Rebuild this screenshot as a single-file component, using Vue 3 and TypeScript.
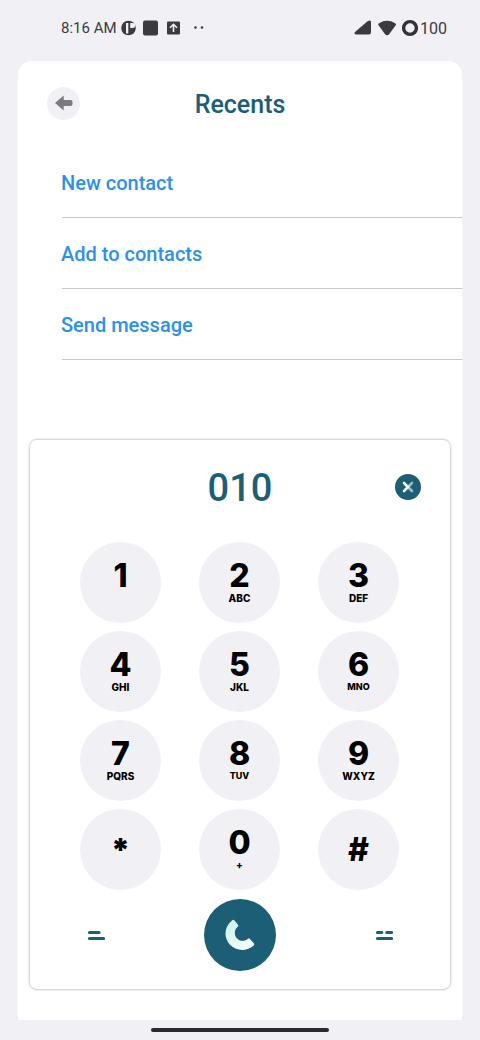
<script setup lang="ts">
import { ref } from 'vue'

interface Key {
  digit: string
  letters?: string
  kind?: 'star' | 'hash' | 'small'
}

const actions: string[] = ['New contact', 'Add to contacts', 'Send message']

const keys: Key[] = [
  { digit: '1' },
  { digit: '2', letters: 'ABC' },
  { digit: '3', letters: 'DEF' },
  { digit: '4', letters: 'GHI' },
  { digit: '5', letters: 'JKL' },
  { digit: '6', letters: 'MNO', kind: 'small' },
  { digit: '7', letters: 'PQRS' },
  { digit: '8', letters: 'TUV', kind: 'small' },
  { digit: '9', letters: 'WXYZ' },
  { digit: '*', kind: 'star' },
  { digit: '0', letters: '+' },
  { digit: '#', kind: 'hash' },
]

const dialled = ref('010')

function press(digit: string): void {
  dialled.value += digit
}

function erase(): void {
  dialled.value = dialled.value.slice(0, -1)
}
</script>

<template>
  <div class="screen">
    <div class="status">
      <span class="clock">8:16 AM</span>
      <svg class="app-icons" width="84" height="18" viewBox="0 0 84 18" aria-hidden="true">
        <circle cx="7.500" cy="9" r="7.300" fill="#3b3b3f" />
        <path d="M5 4v10.500h2.300V4zM9.200 4h2.400a2.300 2.300 0 0 1 0 5H9.200z" fill="#f1f0f5" />
        <rect x="22" y="1.500" width="15" height="15" rx="2" fill="#3b3b3f" />
        <rect x="46" y="2.500" width="13" height="13" rx="1" fill="#3b3b3f" />
        <path d="M52.500 13V5.500M49 8.800l3.500-3.500L56 8.800" fill="none" stroke="#f1f0f5" stroke-width="1.600" />
        <circle cx="74.500" cy="8.500" r="1.300" fill="#3b3b3f" />
        <circle cx="81" cy="8.500" r="1.300" fill="#3b3b3f" />
      </svg>
      <svg class="signals" width="64" height="18" viewBox="0 0 64 18" aria-hidden="true">
        <path d="M1 13 13.500 2.300q3.500-2 3.500 1V13q0 2.500-2 2.500H2q-2.500-.600-1-2.500z" fill="#3b3b3f" />
        <path d="M24.500 6.300q-.800-1.200.600-2.100 8-4.800 16 0 1.400.900.600 2.100l-6.600 9q-2 1.700-4 0z" fill="#3b3b3f" />
        <circle cx="56" cy="9" r="6.400" fill="none" stroke="#333337" stroke-width="3.400" />
      </svg>
      <span class="battery">100</span>
    </div>

    <main class="sheet">
      <header class="bar">
        <button class="back" type="button" aria-label="Back">
          <svg width="18" height="16" viewBox="0 0 18 16" aria-hidden="true">
            <path d="M0 8 8.700 .500V5H15.500Q17.500 5 17.500 7V9Q17.500 11 15.500 11H8.700V15.500z" fill="#7b7b7d" />
          </svg>
        </button>
        <h1>Recents</h1>
      </header>

      <ul class="actions">
        <li v-for="action in actions" :key="action">
          <button type="button">{{ action }}</button>
        </li>
      </ul>

      <section class="dialer" aria-label="Dial pad">
        <div class="display">
          <input v-model="dialled" class="number" type="tel" aria-label="Phone number" />
          <button class="erase" type="button" aria-label="Delete digit" @click="erase">
            <svg width="26" height="26" viewBox="0 0 26 26" aria-hidden="true" fill="none" stroke-linecap="round" stroke-width="2.600">
              <path d="M13 13 17 9M13 13l4 4" stroke="#9dbfca" />
              <path d="M9 9 13 13 9 17" stroke="#fff" />
            </svg>
          </button>
        </div>

        <div class="pad">
          <button
            v-for="key in keys"
            :key="key.digit"
            type="button"
            class="key"
            :class="key.kind"
            @click="press(key.digit)"
          >
            <span class="digit">{{ key.digit }}</span>
            <span v-if="key.letters" class="letters">{{ key.letters }}</span>
          </button>
        </div>

        <div class="controls">
          <button class="side" type="button" aria-label="Call list">
            <svg width="18" height="12" viewBox="0 0 18 12" aria-hidden="true" stroke="#1b5e76" stroke-width="3.200" stroke-linecap="round">
              <path d="M2.500 3.500H12M2.500 9.500H16.500" />
            </svg>
          </button>
          <button class="call" type="button" aria-label="Call">
            <svg width="30" height="32" viewBox="0 0 30 32" aria-hidden="true">
              <defs>
                <linearGradient id="handset" x1="0" y1="0" x2="1" y2="1">
                  <stop offset="0" stop-color="#cdf1ea" />
                  <stop offset="1" stop-color="#fbfffe" />
                </linearGradient>
              </defs>
              <path
                d="M7 1.400Q8.300 .200 9.500 1.500L13 5.700Q13.800 6.900 12.700 7.700C9.300 10.500 8.700 15.800 11.800 19.200C14.800 22.400 19.700 22.700 23 19.700Q24 18.900 24.900 20L28.800 24.200Q29.900 25.500 28.600 26.600C21.700 33 10.900 32.300 4.800 25.600C-1.600 18.500-.900 7.700 7 1.400z"
                fill="url(#handset)"
              />
            </svg>
          </button>
          <button class="side" type="button" aria-label="More options">
            <svg width="18" height="12" viewBox="0 0 18 12" aria-hidden="true" stroke="#1b5e76" stroke-width="3.200" stroke-linecap="round">
              <path d="M2.500 3.500H6.700M11.800 3.500H16.500M2.500 9.500H16.500" />
            </svg>
          </button>
        </div>
      </section>
    </main>

    <div class="home"></div>
  </div>
</template>

<style>
body {
  background: #f1f0f5;
}
</style>

<style scoped>
.screen {
  box-sizing: border-box;
  min-height: 100vh;
  display: flex;
  flex-direction: column;
  background: #f1f0f5;
  font-family: Roboto, 'Liberation Sans', sans-serif;
}

button {
  padding: 0;
  border: 0;
  background: none;
  color: inherit;
  font: inherit;
  cursor: pointer;
}

svg {
  display: block;
}

.status {
  height: 56px;
  padding: 0 33px 5px 61px;
  display: flex;
  align-items: center;
  color: #3b3b3f;
  font-size: 15px;
}

.battery {
  font-size: 16px;
}

.app-icons {
  margin-left: 4px;
}

.signals {
  margin-left: auto;
}

.battery {
  margin-left: 2px;
}

.sheet {
  flex: 1;
  margin: 0 18px;
  display: flex;
  flex-direction: column;
  background: #fff;
  border-radius: 14px 14px 0 0;
}

.bar {
  height: 84px;
  padding: 0 29px 2px;
  display: grid;
  grid-template-columns: 1fr auto 1fr;
  align-items: center;
}

.back {
  width: 33px;
  height: 33px;
  display: grid;
  place-items: center;
  border-radius: 50%;
  background: #f1f0f5;
}

h1 {
  margin: 0;
  padding-top: 4px;
  color: #1b5e76;
  font-size: 25px;
  line-height: 30px;
  font-weight: 500;
}

.actions {
  margin: 0;
  padding: 0 0 0 44px;
  list-style: none;
}

.actions li {
  height: 68px;
  padding-top: 2px;
  display: flex;
  align-items: center;
  border-bottom: 1px solid #c9c9cb;
}

.actions button {
  margin-left: -1px;
  color: #2b90ee;
  font-size: 20px;
  line-height: 28px;
  font-weight: 500;
}

.dialer {
  margin: auto 11px 30px;
  padding-bottom: 18px;
  border: 1px solid #d9d9db;
  border-radius: 8px;
  box-shadow: 0 0 2px #c9c9cb;
}

.display {
  height: 94px;
  margin-bottom: 8px;
  padding: 0 29px;
  display: grid;
  grid-template-columns: 1fr 200px 1fr;
  align-items: center;
}

.number {
  grid-column: 2;
  box-sizing: border-box;
  width: 100%;
  padding: 2px 0 0;
  border: 0;
  outline: 0;
  background: none;
  color: #1b5e76;
  font: 500 38px/44px Roboto, 'Liberation Sans', sans-serif;
  text-align: center;
}

.erase {
  justify-self: end;
  width: 26px;
  height: 26px;
  border-radius: 50%;
  background: #1b5e76;
}

.pad {
  padding: 0 51px 0 50px;
  display: grid;
  grid-template-columns: repeat(3, 81px);
  justify-content: space-between;
  row-gap: 8px;
}

.key {
  height: 81px;
  padding-top: 18px;
  display: flex;
  flex-direction: column;
  align-items: center;
  border-radius: 50%;
  background: #f1f0f5;
  color: #000;
  font-family: Inter, 'Liberation Sans', sans-serif;
  font-weight: 800;
}

.digit {
  font-size: 32px;
  line-height: 32px;
}

.letters {
  font-size: 10px;
  line-height: 12px;
}

.small .letters {
  font-size: 9px;
}

.hash,
.star {
  padding-top: 0;
  justify-content: center;
}

.star {
  font-weight: 900;
}

.controls {
  margin-top: 9px;
  padding: 0 57px;
  display: flex;
  align-items: center;
  justify-content: space-between;
}

.call {
  width: 72px;
  height: 72px;
  display: grid;
  place-items: center;
  border-radius: 50%;
  background: #1b5e76;
}

.home {
  width: 37%;
  height: 4px;
  margin: 8px auto;
  border-radius: 2px;
  background: #2b2b2d;
}
</style>
